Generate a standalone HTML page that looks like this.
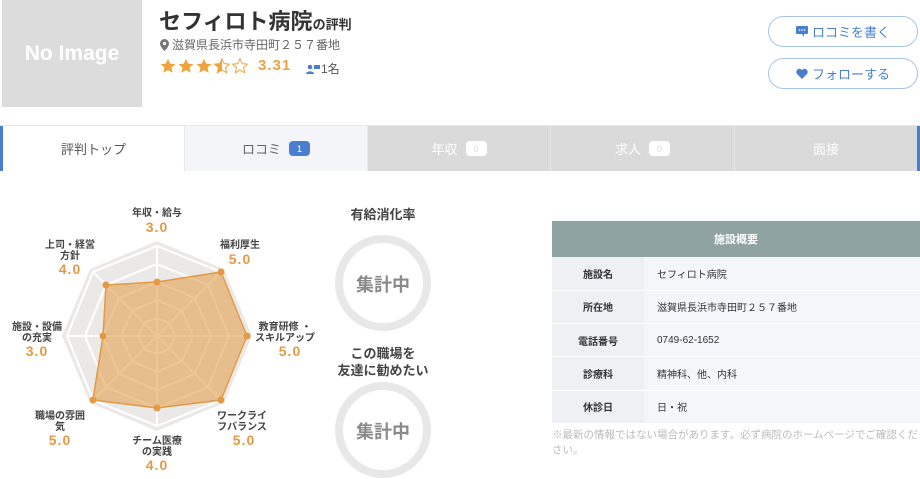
<!DOCTYPE html>
<html><head><meta charset="utf-8"><style>
*{margin:0;padding:0;box-sizing:border-box}
body{width:920px;height:479px;overflow:hidden;background:#fff;font-family:"Liberation Sans","Noto Sans CJK JP",sans-serif;color:#333;position:relative}
.abs{position:absolute}
.noimg{left:2px;top:0;width:140px;height:107px;background:#dcdcdc;color:#fff;font-size:21px;font-weight:bold;display:flex;align-items:center;justify-content:center}
.btn{left:768px;width:150px;height:31px;border:1.5px solid #a9c4ec;border-radius:16px;color:#4a7fd0;font-size:13px;display:flex;align-items:center;justify-content:center;gap:4px}
.tabs{left:0;top:125px;width:920px;height:46px;display:flex;border-top:1px solid #e8e8e8;border-bottom:1px solid #e8e8e8}
.tab{height:45px;display:flex;align-items:center;justify-content:center;font-size:13px;gap:8px;border-right:1px solid #e8e8e8}
.badge{background:#fff;color:#ddd;font-size:9px;border-radius:4px;width:21px;height:15px;display:flex;align-items:center;justify-content:center}
.lbl{font-size:10px;color:#444;text-align:center;line-height:11px;font-weight:bold}
.val{font-size:14px;color:#e39a45;font-weight:bold;text-align:center;letter-spacing:1px}
table{border-collapse:collapse;font-size:10px}
td{height:33.3px;border-bottom:1px solid #fff}
td.k{width:92px;background:#eef0f3;text-align:center;font-weight:bold;color:#333}
td.v{background:#f5f6f9;padding-left:13px;color:#333}
</style></head><body>
<div class="abs noimg">No Image</div>
<div class="abs" style="left:159px;top:4px;font-size:22px;font-weight:bold;color:#333">セフィロト病院<span style="font-size:13px">の評判</span></div>
<div class="abs" style="left:160px;top:36px;font-size:12px;color:#666;display:flex;align-items:center;gap:3px"><svg width="9" height="12" viewBox="0 0 9 12"><path d="M4.5 0A4.5 4.5 0 0 0 0 4.5C0 8 4.5 12 4.5 12S9 8 9 4.5A4.5 4.5 0 0 0 4.5 0Z" fill="#777"/><circle cx="4.5" cy="4.5" r="1.6" fill="#fff"/></svg>滋賀県長浜市寺田町２５７番地</div>
<svg class="abs" style="left:160px;top:58px" width="90" height="18" viewBox="0 0 90 18">
<defs><path id="s" d="M8 0.8L10.2 5.6 15.4 6.1 11.5 9.6 12.7 14.8 8 12.1 3.3 14.8 4.5 9.6 0.6 6.1 5.8 5.6Z"/><clipPath id="h"><rect x="0" y="0" width="8" height="18"/></clipPath></defs>
<use href="#s" fill="#f0a33c"/><use href="#s" x="18" fill="#f0a33c"/><use href="#s" x="36" fill="#f0a33c"/>
<use href="#s" x="54" fill="none" stroke="#f0a33c" stroke-width="1"/><g transform="translate(54 0)"><use href="#s" fill="#f0a33c" clip-path="url(#h)"/></g>
<use href="#s" x="72" fill="none" stroke="#f0a33c" stroke-width="1"/>
</svg>
<div class="abs" style="left:258px;top:57px;font-size:15px;color:#f0a33c;font-weight:bold;letter-spacing:1px">3.31</div>
<div class="abs" style="left:306px;top:60px;font-size:12px;color:#555;display:flex;align-items:center;gap:1px"><svg width="14" height="10" viewBox="0 0 14 10"><circle cx="4" cy="3" r="2.3" fill="#4a7fd0"/><path d="M0 10C0 6.5 8 6.5 8 10Z" fill="#4a7fd0"/><rect x="8" y="1" width="6" height="4" fill="#4a7fd0"/></svg>1名</div>
<div class="abs btn" style="top:16px"><svg width="12" height="11" viewBox="0 0 12 11"><rect width="12" height="8" rx="1" fill="#4a7fd0"/><path d="M6 8L8 11 8 8Z" fill="#4a7fd0"/><circle cx="3.5" cy="4" r=".8" fill="#fff"/><circle cx="6" cy="4" r=".8" fill="#fff"/><circle cx="8.5" cy="4" r=".8" fill="#fff"/></svg>ロコミを書く</div>
<div class="abs btn" style="top:58px"><svg width="12" height="11" viewBox="0 0 12 11"><path d="M6 11L1 6A3 3 0 0 1 6 2 3 3 0 0 1 11 6Z" fill="#4a7fd0"/></svg>フォローする</div>
<div class="abs tabs">
<div class="tab" style="width:185px;background:#fff;border-left:3px solid #4a7fd0;color:#555">評判トップ</div>
<div class="tab" style="width:183px;background:#f3f5f9;color:#666">ロコミ <span class="badge" style="background:#4a7fd0;color:#fff">1</span></div>
<div class="tab" style="width:183px;background:#dadada;color:#fff">年収 <span class="badge">0</span></div>
<div class="tab" style="width:184px;background:#dadada;color:#fff">求人 <span class="badge">0</span></div>
<div class="tab" style="width:185px;background:#dadada;color:#fff;border-right:3px solid #4a7fd0">面接</div>
</div>
<svg class="abs" style="left:0;top:0" width="540" height="479">
<polygon points="157,241 224,269 252,336 224,403 157,431 90,403 62,336 90,269" fill="#ebe9e8"/>
<g fill="none" stroke="#fff" stroke-width="2">
<polygon points="157,246 221,272 247,336 221,400 157,426 93,400 67,336 93,272"/>
<polygon points="157,264 208,285 229,336 208,387 157,408 106,387 85,336 106,285"/>
<polygon points="157,282 195,298 211,336 195,374 157,390 119,374 103,336 119,298"/>
<polygon points="157,300 182,311 193,336 182,361 157,372 132,361 121,336 132,311"/>
<polygon points="157,318 170,323 175,336 170,349 157,354 144,349 139,336 144,323"/>
<path d="M157,246V426M67,336H247M93,272L221,400M221,272L93,400"/>
</g>
<polygon points="157,282 221,272 247,336 221,400 157,408 93,400 103,336 106,285" fill="rgba(226,160,80,0.6)" stroke="#e39a45" stroke-width="1.5"/>
<g fill="#e39a45"><circle cx="157" cy="282" r="3.5"/><circle cx="221" cy="272" r="3.5"/><circle cx="247" cy="336" r="3.5"/><circle cx="221" cy="400" r="3.5"/><circle cx="157" cy="408" r="3.5"/><circle cx="93" cy="400" r="3.5"/><circle cx="103" cy="336" r="3.5"/><circle cx="106" cy="285" r="3.5"/></g>
<circle cx="383" cy="283" r="44" fill="none" stroke="#e8e8e8" stroke-width="8"/>
<circle cx="383" cy="430" r="44" fill="none" stroke="#e8e8e8" stroke-width="8"/>
</svg>
<div class="abs lbl" style="left:107px;top:208px;width:100px">年収・給与</div><div class="abs val" style="left:107px;top:219px;width:100px">3.0</div>
<div class="abs lbl" style="left:210px;top:240px;width:60px">福利厚生</div><div class="abs val" style="left:210px;top:251px;width:60px">5.0</div>
<div class="abs lbl" style="left:250px;top:322px;width:70px">教育研修 ・<br>スキルアップ</div><div class="abs val" style="left:260px;top:343px;width:60px">5.0</div>
<div class="abs lbl" style="left:212px;top:411px;width:60px">ワークライ<br>フバランス</div><div class="abs val" style="left:214px;top:432px;width:60px">5.0</div>
<div class="abs lbl" style="left:117px;top:436px;width:80px">チーム医療<br>の実践</div><div class="abs val" style="left:117px;top:457px;width:80px">4.0</div>
<div class="abs lbl" style="left:30px;top:411px;width:60px">職場の雰囲<br>気</div><div class="abs val" style="left:30px;top:432px;width:60px">5.0</div>
<div class="abs lbl" style="left:7px;top:322px;width:60px">施設・設備<br>の充実</div><div class="abs val" style="left:7px;top:343px;width:60px">3.0</div>
<div class="abs lbl" style="left:40px;top:240px;width:60px">上司・経営<br>方針</div><div class="abs val" style="left:40px;top:261px;width:60px">4.0</div>
<div class="abs" style="left:333px;top:204px;width:100px;text-align:center;font-size:13px;font-weight:bold;color:#444">有給消化率</div>
<div class="abs" style="left:333px;top:271px;width:100px;text-align:center;font-size:18px;font-weight:bold;color:#8a8a8a">集計中</div>
<div class="abs" style="left:323px;top:345px;width:120px;text-align:center;font-size:13px;font-weight:bold;color:#444;line-height:17px">この職場を<br>友達に勧めたい</div>
<div class="abs" style="left:333px;top:418px;width:100px;text-align:center;font-size:18px;font-weight:bold;color:#8a8a8a">集計中</div>
<div class="abs" style="left:552px;top:221px;width:368px;height:36px;background:#8fa3a3;color:#fff;font-size:11px;font-weight:bold;display:flex;align-items:center;justify-content:center">施設概要</div>
<table class="abs" style="left:552px;top:257px;width:368px">
<tr><td class="k">施設名</td><td class="v">セフィロト病院</td></tr>
<tr><td class="k">所在地</td><td class="v">滋賀県長浜市寺田町２５７番地</td></tr>
<tr><td class="k">電話番号</td><td class="v">0749-62-1652</td></tr>
<tr><td class="k">診療科</td><td class="v">精神科、他、内科</td></tr>
<tr><td class="k">休診日</td><td class="v">日・祝</td></tr>
</table>
<div class="abs" style="left:552px;top:428px;width:366px;font-size:10.5px;color:#bbb;line-height:15px">※最新の情報ではない場合があります。必ず病院のホームページでご確認ください。</div>
</body></html>
